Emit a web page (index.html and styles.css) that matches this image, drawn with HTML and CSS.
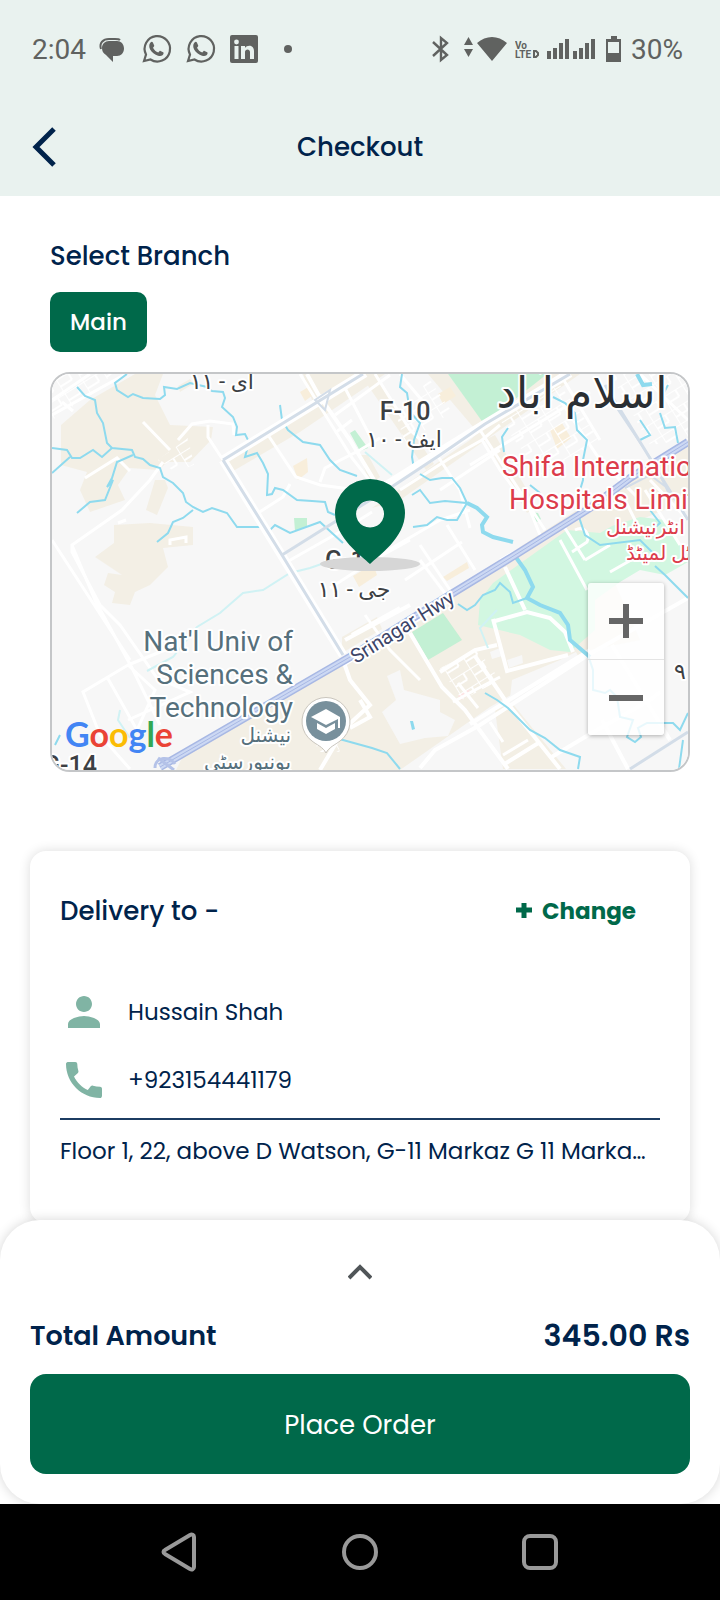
FILE: index.html
```html
<!DOCTYPE html>
<html lang="en">
<head>
  <meta charset="UTF-8">
  <meta name="viewport" content="width=device-width, initial-scale=1.0">
  <title>Checkout</title>
  <link rel="stylesheet" href="styles.css">
</head>
<body>
  <div class="status-bar">
    <div class="status-left">
      <span class="clock">2:04</span>
      <div class="status-icons">
        <svg width="28" height="28" viewBox="0 0 28 28">
          <path d="M3 14C1 8 5 4 11 4h6c3 0 4 0 5 1" fill="none" stroke="#606260" stroke-width="2"/>
          <path d="M11 6h8c4 0 7 3 7 7.500s-3 7.500-7 7.500h-4v6l-7-7c-3-2-4-4-4-7 0-4 3-7 7-7z" fill="#606260"/>
        </svg>
        <svg class="whatsapp" width="28" height="28" viewBox="0 0 28 28">
          <path d="M2 26l2-6.500A12.700 12.700 0 1 1 8.500 24.500z" fill="none" stroke="#606260" stroke-width="2.200"/>
          <path d="M8.500 7.500c1-1 2-.8 2.500.2l1.200 2.700c.2.500-.1 1-1.200 2.300 1.200 2.300 2.900 3.900 5.300 4.800 1.200-1.500 1.600-1.900 2.200-1.600l2.700 1.300c.8.500.4 2.100-.7 3-1.600 1.300-4 .9-6.800-.5-3.200-1.700-5.800-4.900-6.300-7.300-.4-2 .1-3.800 1.100-4.900z" fill="#606260"/>
        </svg>
        <svg class="whatsapp" width="28" height="28" viewBox="0 0 28 28">
          <path d="M2 26l2-6.500A12.700 12.700 0 1 1 8.500 24.500z" fill="none" stroke="#606260" stroke-width="2.200"/>
          <path d="M8.500 7.500c1-1 2-.8 2.500.2l1.200 2.700c.2.500-.1 1-1.200 2.300 1.200 2.300 2.900 3.900 5.300 4.800 1.200-1.500 1.600-1.900 2.200-1.600l2.700 1.300c.8.500.4 2.100-.7 3-1.600 1.300-4 .9-6.800-.5-3.200-1.700-5.800-4.900-6.300-7.300-.4-2 .1-3.800 1.100-4.900z" fill="#606260"/>
        </svg>
        <svg width="28" height="28" viewBox="0 0 28 28">
          <rect width="28" height="28" rx="2" fill="#606260"/>
          <circle cx="6.500" cy="7" r="2.400" fill="#e9f2ef"/>
          <path d="M4.500 11h4v13h-4zM11 11h4v2c2-3.500 9-3.500 9 3v8h-4v-7c0-3.500-5-3.500-5 0v7h-4z" fill="#e9f2ef"/>
        </svg>
        <svg width="28" height="28" viewBox="0 0 28 28">
          <circle cx="14" cy="14" r="4" fill="#606260"/>
        </svg>
      </div>
    </div>
    <div class="status-right">
      <svg width="24" height="28" viewBox="0 0 24 28">
        <path d="M2 7l14 13-6 5V3l6 5L2 21" fill="none" stroke="#606260" stroke-width="2.400"/>
      </svg>
      <svg width="44" height="28" viewBox="0 0 44 28">
        <path d="M1 10l4.500-8 4.500 8zM1 14h9l-4.500 8zM14 8c9-8 21-8 30 0L29 26z" fill="#606260"/>
      </svg>
      <svg width="24" height="28" viewBox="0 0 24 28">
        <text class="volte" x="0" y="14">Vo</text>
        <text class="volte" x="0" y="23">LTE</text>
        <path d="M19 16h2l2 2v2l-2 2h-2z" fill="none" stroke="#606260" stroke-width="2"/>
      </svg>
      <svg width="48" height="28" viewBox="0 0 48 28">
        <path d="M0 16h4v8H0zM6 13h4v11H6zM12 8h4v16h-4zM18 4h4v20h-4zM26 16h4v8h-4zM32 13h4v11h-4zM38 8h4v16h-4zM44 4h4v20h-4z" fill="#606260"/>
      </svg>
      <svg width="20" height="28" viewBox="0 0 20 28">
        <path d="M8 1h6v3h4v23H3V4h5zM5 7v11h11V7z" fill="#606260" fill-rule="evenodd"/>
      </svg>
      <span>30%</span>
    </div>
  </div>

  <header class="header">
    <button class="back-btn" aria-label="Back">
      <svg width="28" height="40" viewBox="0 0 28 40">
        <path d="M24 2L6 20l18 18" fill="none" stroke="#00234b" stroke-width="5"/>
      </svg>
    </button>
    <h1>Checkout</h1>
  </header>

  <main class="content">
    <section class="branch">
      <h2>Select Branch</h2>
      <button class="branch-btn">Main</button>

      <div class="map">
        <svg class="map-canvas" viewBox="52 374 636 396" preserveAspectRatio="xMidYMid slice">
          <defs>
            <pattern id="blocks" width="22" height="16" patternUnits="userSpaceOnUse" patternTransform="rotate(-32)">
              <path d="M0 0h22M0 8h14M0 0v16M14 0v8" fill="none" stroke="#fff" stroke-width="2"/>
            </pattern>
          </defs>

          <rect x="52" y="374" width="636" height="396" fill="#f7f7f7"/>

          <!-- built up areas -->
          <g fill="#f3efe5">
            <path d="M61 425L90 400 135 374H163L155 395 165 415 170 425 213 427 211 440 190 462 168 462 158 470 130 468 118 485 125 500 90 512 80 490 87 472 61 465z"/>
            <path d="M155 480H165L168 488 157 515 146 510z"/>
            <path d="M114 525L150 523 193 527V545L163 548 168 567 150 585 135 592 130 605 112 603 115 592 104 585 108 573 122 575 95 557 114 543z"/>
            <path d="M303 374H385L300 432 228 474 220 458 295 415 312 400z"/>
            <path d="M178 386l12-7 3 5-13 8z"/>
            <path d="M428 374H448L485 424 474 428z"/>
            <path d="M545 374H580L400 500 372 508 470 440z"/>
            <path d="M360 374l14 0 60 90-8 6z"/>
            <path d="M485 440l10-5 42 72-10 6z"/>
            <path d="M360 455l8 0 12 22-10 8z"/>
            <path d="M176 770L187 748 250 712 342 658 500 560 580 508 688 440V500L640 520 600 550 640 640 590 650 490 707 400 770z"/>
            <path d="M342 637l35-20 5 12-40 24z"/>
            <path d="M495 710L512 703 566 769H503z"/>
          </g>
          <g fill="#f8eedb">
            <path d="M438 394l12-7 6 9-13 8z"/>
            <path d="M550 430l12-7 9 15-14 11z"/>
            <path d="M293 466l14-8 1 14-10 8z"/>
            <path d="M353 576l20-12 4 11-18 12zM443 577l24-15 2 6-22 13zM300 392l10-6 3 9-8 6z"/>
          </g>
          <g fill="#f7f7f7">
            <path d="M387 676L400 670 404 690 440 700 440 712 455 720 448 736 425 738 400 744 382 712 396 700z"/>
            <path d="M490 652l10-4 2 8-10 3zM507 660l15-5 1 8-14 5zM560 660l16-8 4 8-50 30-20 8 2-18z"/>
          </g>

          <!-- parks -->
          <g fill="#d2f7e1">
            <path d="M480 600L493 583 525 560 567 530 600 533 612 526 640 517 665 520 680 545 688 562 665 575 640 570 620 582 595 600 595 630 570 652 550 650 520 635 478 625z"/>
          </g>
          <g fill="#c3f0d4">
            <path d="M448 374H547L484 424z"/>
            <path d="M412 632L443 613 462 640 428 660z"/>
            <path d="M350 433l5-3 13 18-8 3zM294 518h13v9l-12 4zM530 512l8 1 3 6-4 3z"/>
            <path d="M360 440l6 8-6 3z"/>
          </g>
          <path d="M458 696l10-7 3 4-10 7z" fill="#fde3e3"/>

          <!-- street grids -->
          <g fill="url(#blocks)">
            <path d="M52 374H112L95 392 52 420z"/>
            <path d="M395 410L430 380 452 412 405 444z"/>
            <path d="M500 420L560 385 600 440 540 475z"/>
            <path d="M610 374H688V440L650 445z"/>
            <path d="M158 460L188 438 194 465 175 472z"/>
            <path d="M440 668L478 650 500 680 462 700z"/>
            <path d="M305 727L330 720 340 752 320 752z"/>
          </g>

          <!-- minor roads -->
          <g fill="none" stroke="#fff" stroke-width="3">
            <path d="M52 415L133 370M52 400L90 374M62 402L73 411M143 422L170 450M85 478L117 458 130 471M178 440L192 424 210 421 233 424 234 435"/>
            <path d="M208 425V437L223 460M163 462L150 480 122 510 72 545 72 552 100 605 120 625 157 678 190 692 128 720"/>
            <path d="M52 540L130 660M72 545L95 600 132 668 160 725M107 677L137 730 155 690 128 665 83 692 100 735 130 769M128 665L165 650"/>
            <path d="M170 545v-5l16-3v6M118 523l8-3"/>
            <path d="M266 432L296 477 320 485 350 489M320 482L325 468 360 450 380 438M300 374L352 458 385 500"/>
            <path d="M258 513L283 497 290 484M335 415L390 375M335 433L352 420M345 388L372 440"/>
            <path d="M285 563L345 529 372 512M330 588L372 561 410 540M365 615L390 650 420 680M420 560L450 600"/>
            <path d="M375 374L410 430 437 455 460 490 470 528M400 490L450 458 482 440 500 425M480 430L545 530M482 440L500 470 530 510 540 535"/>
            <path d="M400 374L430 410M470 465L560 410 590 392M440 490L500 450M380 555L440 520 470 510M405 580L462 542M447 525L475 570M420 545L450 590"/>
            <path d="M500 560L600 505M563 525L585 560M575 530c10-5 15 5 12 12l-15 10M560 540L587 590M585 560l25 -15M610 572L640 555"/>
            <path d="M560 400L600 460 640 500M560 374L600 440M640 374L688 420M650 480L688 520M645 490L680 545M625 500L640 530"/>
          </g>
          <g fill="none" stroke="#fff" stroke-width="4">
            <path d="M307 374L318 394 350 440 380 490"/>
            <path d="M410 633L442 687 465 710 508 769M493 619L507 671 568 655M495 621L527 612 550 618 565 632 573 652M505 567L525 610"/>
            <path d="M440 672L475 650 497 645M475 656L505 700 560 769M503 765L540 742M420 768L435 750 480 725 588 655 688 598M470 724L590 650"/>
            <path d="M550 758L590 734 650 700 660 692M602 720L628 769M612 645L670 740M343 660L350 680 370 705 345 728M320 770L345 728M360 700L370 717 350 728"/>
            <path d="M345 640L410 605M343 665L450 600M352 635L400 608"/>
          </g>
          <path d="M453 702L475 690 500 677M458 683L478 708M490 722L503 742M528 740L503 755" fill="none" stroke="#fff" stroke-width="3"/>

          <!-- streams -->
          <g class="stream">
            <path d="M127 374L115 383 117 390 128 397 133 394 143 398 160 399 165 395 164 387 177 389 190 383 207 387 212 391 223 392 225 398 222 407 233 417 237 427 236 435 245 434 249 442 245 457 257 453 263 463 268 474 267 495 272 494 275 488 283 490 297 500 312 501 325 502 328 512 335 515"/>
            <path d="M77 387L85 396 95 400 97 413 103 423 107 443 112 448 132 450 135 457 143 459 150 465 160 468 163 477 173 483 183 493 186 502 193 507 203 512 212 508 227 513 237 527 260 527M270 530L275 525 290 533 320 522 332 533 343 543"/>
            <path d="M193 510L183 518 173 522 168 533 157 542M133 455L117 462 112 478 107 487 113 480 105 500 90 502 77 513"/>
            <path d="M280 405L282 420 288 430 303 442 320 445 330 460 340 470 357 476"/>
            <path d="M402 374L400 387 407 393 410 412 420 423 414 440 412 457 414 469M420 474L430 480 442 478 452 478 460 488 467 503 445 501 430 503 420 490 412 495M467 503L457 520 447 520 437 517 427 525 413 527"/>
            <path d="M508 428L502 437 504 452M553 397L565 403 575 413 577 430 587 440 583 460 583 480 577 500 580 520 585 535 600 545 640 540 655 555"/>
            <path d="M458 604L467 610 475 605 483 595 495 590 500 583 510 592 513 603 527 598M485 693L497 700 508 708 530 730 545 738 560 750 580 757 578 769"/>
            <path d="M320 735L343 740 372 748 387 753 400 769M640 440L650 435 640 420M660 413L665 428 675 427 678 443M650 510L660 523 652 530M668 385L660 400M55 745L60 735M530 485L540 493M655 566L665 575 688 598"/>
          </g>
          <path class="stream stream-wide" d="M467 503L477 508 487 517 482 525 483 532 493 537 513 542M515 556L525 570 533 587 527 598 540 605 560 613 568 625 570 640 590 657M637 374L643 385 652 384"/>
          <path class="stream" d="M52 448L67 450 72 458 80 458 93 450 102 457 112 448M52 473L70 457M588 655L593 670 593 690 605 693 610 690 617 697 620 717 633 720 627 737 635 742 641 737 638 728 647 723 673 723 680 730 688 713M683 740L679 769"/>
          <path d="M147 671L173 657 197 627 220 613 243 593 263 590 290 573 310 568 333 560M120 710L118 720 130 738M497 610L480 628 488 648M365 452L392 475" fill="none" stroke="#d0f2f4" stroke-width="2"/>
          <path d="M410 721l3 0 2 8-3 1z" fill="#8edaee"/>

          <!-- highways -->
          <g fill="none" stroke="#fff" stroke-width="9">
            <path d="M223 460L365 373M360 502L435 455 485 424 570 373M223 460L343 655"/>
          </g>
          <g class="road">
            <path d="M223 460L363 374M282 555L333 523 393 486 440 455 485 424 570 374M223 460L282 555 343 655M605 385L645 450 660 475 688 520M630 769L688 732"/>
          </g>
          <path class="road road-thin" d="M608 395L655 465 672 500M625 488L650 475 670 490M315 400L330 390 325 410z"/>
          <path d="M160 767L350 657 453 593 507 560 590 508 630 478 688 442" fill="none" stroke="#a8b8e4" stroke-width="8"/>
          <path d="M160 767L350 657 453 593 507 560 590 508 630 478 688 442" fill="none" stroke="#ccd8f3" stroke-width="5"/>
          <path d="M160 767L350 657 453 593 507 560 590 508 630 478 688 442" fill="none" stroke="#a8b8e4" stroke-width="1"/>
          <path d="M155 768c0-12 15-12 20-4M158 758l16 12" fill="none" stroke="#b4c2e8" stroke-width="3"/>

          <!-- place names -->
          <g class="label" text-anchor="middle">
            <text class="urdu" x="222" y="389">ای - ۱۱</text>
            <text class="sector" x="405" y="420">F-10</text>
            <text class="urdu" x="404" y="447">ایف - ۱۰</text>
            <text class="sector" x="352" y="569">G-11</text>
            <text class="urdu" x="354" y="597">جی - ۱۱</text>
            <text class="sector" x="70" y="774">G-14</text>
            <text class="urdu" x="680" y="679">۹</text>
            <text class="city" x="582" y="408">اسلام آباد</text>
          </g>
          <g class="label hospital">
            <text x="502" y="476">Shifa International</text>
            <text x="509" y="509">Hospitals Limited</text>
            <text class="urdu" x="606" y="534">انٹرنیشنل</text>
            <text class="urdu" x="626" y="560">ٹل لمیٹڈ</text>
          </g>
          <g class="label university" text-anchor="end">
            <text x="293" y="651">Nat'l Univ of</text>
            <text x="293" y="684">Sciences &amp;</text>
            <text x="293" y="717">Technology</text>
            <text class="urdu" x="291" y="742">نیشنل</text>
            <text class="urdu" x="291" y="769">یونیورسٹی</text>
          </g>
          <text class="label highway" x="0" y="0" transform="translate(356 664) rotate(-32)">Srinagar Hwy</text>

          <!-- university marker -->
          <path d="M326 753c-3-6-9-8-14-12a24 24 0 1 1 28 0c-5 4-11 6-14 12z" fill="#fff" stroke="#c9c5bd" stroke-width="1"/>
          <circle cx="326" cy="721" r="20" fill="#78909c"/>
          <path d="M326 709l-15 8 15 8 12-6v9h2v-11zM317 723v6l9 5 9-5v-6l-9 5z" fill="#fff"/>

          <!-- branch marker -->
          <ellipse cx="370" cy="564" rx="50" ry="7" fill="#d6d6d6"/>
          <path d="M370 564C362 556 335 538 335 513a35 34 0 0 1 70 0c0 25-27 43-35 51zM370 500.500a14 13.500 0 1 0 .1 0z" fill="#00694a" fill-rule="evenodd"/>

          <text class="google" x="65" y="747"><tspan fill="#4285f4">G</tspan><tspan fill="#ea4335">o</tspan><tspan fill="#fbbc05">o</tspan><tspan fill="#4285f4">g</tspan><tspan fill="#34a853">l</tspan><tspan fill="#ea4335">e</tspan></text>
        </svg>

        <div class="zoom-control">
          <button aria-label="Zoom in">
            <svg width="34" height="34" viewBox="0 0 34 34"><path d="M0 17h34M17 0v34" stroke="#666" stroke-width="6"/></svg>
          </button>
          <button aria-label="Zoom out">
            <svg width="34" height="34" viewBox="0 0 34 34"><path d="M0 17h34" stroke="#666" stroke-width="6"/></svg>
          </button>
        </div>
      </div>
    </section>

    <section class="delivery-card">
      <div class="delivery-head">
        <h2>Delivery to -</h2>
        <button class="change-btn">
          <svg width="16" height="16" viewBox="0 0 16 16"><path d="M0 7h16M8 0v15" stroke="#00694a" stroke-width="5"/></svg>
          Change
        </button>
      </div>
      <div class="contact-row">
        <svg width="48" height="48" viewBox="0 0 24 24">
          <path d="M12 12c2.210 0 4-1.790 4-4s-1.790-4-4-4-4 1.790-4 4 1.790 4 4 4zm0 2c-2.670 0-8 1.340-8 4v2h16v-2c0-2.660-5.330-4-8-4z" fill="#80b4a4"/>
        </svg>
        <span>Hussain Shah</span>
      </div>
      <div class="contact-row">
        <svg width="48" height="48" viewBox="0 0 24 24">
          <path d="M20.010 15.380c-1.230 0-2.420-.2-3.530-.560-.350-.120-.740-.030-1.010.240l-1.570 1.970c-2.830-1.350-5.480-3.900-6.890-6.830l1.950-1.660c.270-.280.350-.670.240-1.020-.370-1.110-.560-2.300-.560-3.530 0-.540-.450-.990-.990-.990H4.190C3.650 3 3 3.240 3 3.990 3 13.280 10.730 21 20.010 21c.710 0 .990-.630.990-1.180v-3.450c0-.540-.450-.990-.990-.990z" fill="#80b4a4"/>
        </svg>
        <span>+923154441179</span>
      </div>
      <p class="address">Floor 1, 22, above D Watson, G-11 Markaz G 11 Marka…</p>
    </section>
  </main>

  <div class="summary">
    <button class="expand-btn" aria-label="Show order details">
      <svg width="24" height="16" viewBox="0 0 24 16">
        <path d="M1 14L12 3l11 11" fill="none" stroke="#505558" stroke-width="4"/>
      </svg>
    </button>
    <div class="total">
      <span>Total Amount</span>
      <span class="total-price">345.00 Rs</span>
    </div>
    <button class="order-btn">Place Order</button>
  </div>

  <nav class="nav-bar">
    <button aria-label="Back">
      <svg width="40" height="40" viewBox="0 0 40 40"><path d="M34 5v30c0 2-2 3-4 2L5 22c-2-1-2-3 0-4L30 3c2-1 4 0 4 2z" fill="none" stroke="#999" stroke-width="4"/></svg>
    </button>
    <button aria-label="Home">
      <svg width="40" height="40" viewBox="0 0 40 40"><circle cx="20" cy="20" r="16" fill="none" stroke="#999" stroke-width="4"/></svg>
    </button>
    <button aria-label="Recent apps">
      <svg width="40" height="40" viewBox="0 0 40 40"><rect x="4" y="4" width="32" height="32" rx="6" fill="none" stroke="#999" stroke-width="4"/></svg>
    </button>
  </nav>
</body>
</html>
```

FILE: styles.css
```css
* {
  box-sizing: border-box;
}

body {
  margin: 0;
  min-height: 100vh;
  display: flex;
  flex-direction: column;
  background-color: #fff;
  color: #00234b;
  font-family: Poppins, Inter, sans-serif;
}

h1, h2, p {
  margin: 0;
}

h1, h2 {
  font-size: 26px;
  font-weight: 500;
  line-height: 40px;
}

button {
  padding: 0;
  border: none;
  background: none;
  font-family: inherit;
  cursor: pointer;
}

svg {
  display: block;
}

/* status bar */
.status-bar {
  display: flex;
  justify-content: space-between;
  align-items: center;
  height: 96px;
  padding: 2px 37px 0 32px;
  background-color: #e9f2ef;
  color: #606260;
  font-family: Roboto, sans-serif;
  font-size: 28px;
}

.status-left {
  display: flex;
  align-items: center;
  gap: 12px;
}

.status-icons {
  display: flex;
  gap: 16px;
}

.whatsapp {
  overflow: visible;
}

.status-right {
  display: flex;
  align-items: center;
  gap: 8px;
}

.volte {
  font-size: 10px;
  font-weight: 700;
  fill: #606260;
}

/* header */
.header {
  display: grid;
  grid-template-columns: 28px 1fr 28px;
  align-items: center;
  height: 100px;
  padding: 2px 30px 0;
  background-color: #e9f2ef;
}

.header h1 {
  text-align: center;
}

/* content */
.content {
  flex: 1;
  display: flex;
  flex-direction: column;
  gap: 79px;
  padding: 40px 30px 0;
}

.branch {
  display: flex;
  flex-direction: column;
  align-items: flex-start;
  padding-left: 20px;
}

.branch-btn {
  margin: 16px 0 20px;
  height: 60px;
  padding: 0 20px;
  border-radius: 10px;
  background-color: #00694a;
  color: #fff;
  font-size: 23px;
  font-weight: 500;
}

.map {
  position: relative;
  width: 100%;
  height: 400px;
  border: 2px solid #c4c6c8;
  border-radius: 20px;
  overflow: hidden;
}

.map-canvas {
  width: 100%;
  height: 100%;
}

.stream {
  fill: none;
  stroke: #8edaee;
  stroke-width: 2;
}

.stream-wide {
  stroke-width: 4;
}

.road {
  fill: none;
  stroke: #d3dde8;
  stroke-width: 3;
}

.road-thin {
  stroke-width: 2;
}

.label {
  font-family: Roboto, "DejaVu Sans", sans-serif;
  font-size: 28px;
  fill: #3c4043;
  stroke: #fff;
  stroke-width: 4;
  stroke-linejoin: round;
  paint-order: stroke;
}

.label .urdu {
  font-size: 22px;
}

.label .sector {
  font-size: 25px;
  font-weight: 500;
}

.label .city {
  font-size: 44px;
  fill: #2b2f33;
}

.hospital {
  fill: #dc3c4b;
}

.university {
  fill: #56707c;
}

.hospital .urdu,
.university .urdu {
  font-size: 20px;
}

.highway {
  font-size: 20px;
  fill: #3c4568;
}

.google {
  font-family: Lato, sans-serif;
  font-size: 34px;
  font-weight: 700;
}

.zoom-control {
  position: absolute;
  right: 24px;
  bottom: 35px;
  display: flex;
  flex-direction: column;
  border-radius: 3px;
  background-color: rgba(255, 255, 255, 0.8);
  box-shadow: 0 1px 4px rgba(0, 0, 0, 0.3);
}

.zoom-control button {
  display: grid;
  place-items: center;
  width: 76px;
  height: 76px;
}

.zoom-control button + button {
  border-top: 1px solid #e4e4e4;
}

/* delivery card */
.delivery-card {
  padding: 40px 30px 56px;
  border-radius: 16px;
  background-color: #fff;
  box-shadow: 0 0 12px rgba(0, 0, 0, 0.14);
}

.delivery-head {
  display: flex;
  justify-content: space-between;
  align-items: center;
  margin-bottom: 57px;
  padding-right: 24px;
}

.change-btn {
  display: flex;
  align-items: center;
  gap: 10px;
  color: #00694a;
  font-size: 23px;
  font-weight: 700;
  line-height: 36px;
}

.contact-row {
  display: flex;
  align-items: center;
  gap: 20px;
  margin-bottom: 20px;
  font-size: 23px;
}

.contact-row + .contact-row {
  margin-bottom: 14px;
}

.address {
  padding-top: 15px;
  border-top: 2px solid #1c3c62;
  font-size: 23px;
  line-height: 32px;
  white-space: nowrap;
  overflow: hidden;
  text-overflow: ellipsis;
}

/* order summary */
.summary {
  position: relative;
  display: flex;
  flex-direction: column;
  margin-top: -6px;
  padding: 40px 30px 30px;
  border-radius: 40px;
  background-color: #fff;
  box-shadow: 0 0 12px rgba(0, 0, 0, 0.16);
}

.expand-btn {
  align-self: center;
  padding: 4px 10px;
}

.total {
  display: flex;
  justify-content: space-between;
  align-items: center;
  margin: 32px 0 18px;
  font-size: 27px;
  font-weight: 600;
  line-height: 40px;
}

.total-price {
  font-size: 30px;
}

.order-btn {
  height: 100px;
  padding-top: 2px;
  border-radius: 16px;
  background-color: #00694a;
  color: #fff;
  font-size: 26px;
}

/* system navigation */
.nav-bar {
  position: relative;
  display: flex;
  justify-content: center;
  align-items: center;
  gap: 140px;
  height: 96px;
  background-color: #000;
}
```
